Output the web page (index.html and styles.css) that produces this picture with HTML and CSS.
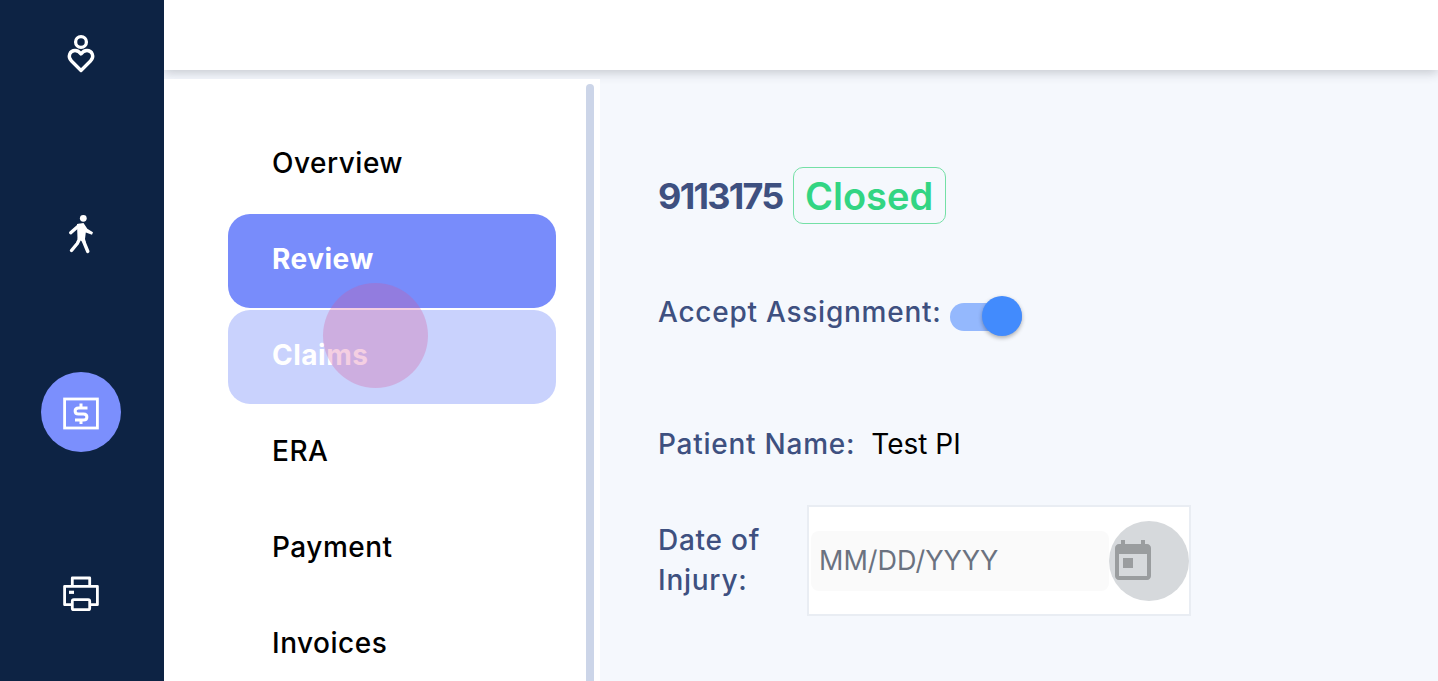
FILE: index.html
```html
<!DOCTYPE html>
<html lang="en">
<head>
<meta charset="utf-8">
<title>Claim 9113175</title>
<link rel="stylesheet" href="styles.css">
</head>
<body>
<div class="app">
  <aside class="rail">
    <div class="rail-item">
      <svg class="rail-icon" viewBox="0 0 40 48" width="40" height="48"><circle cx="20" cy="14" r="5.4" class="ln"/><path class="ln" d="M20 42.5 L10.5 33 C6 28.5 9 22.5 14 22.5 C16.5 22.5 18.5 23.8 20 26 C21.5 23.8 23.5 22.5 26 22.5 C31 22.5 34 28.5 29.5 33 Z"/></svg>
    </div>
    <div class="rail-item">
      <svg class="rail-icon" viewBox="0 0 40 48" width="40" height="48"><circle cx="22.3" cy="10.3" r="3.4" class="fill"/><path class="fill" d="M16 16 L22.5 15 L26.3 20.8 L32 24.3 L31 26.8 L24.8 24.5 L24 31 L25 35 L16.5 31 Z"/><path class="ln-w" d="M18 17.5 L9.7 24.7"/><path class="ln-w" d="M21 30 L23.5 35.5 L26.8 43.5"/><path class="ln-w" d="M18.5 31 L16.3 35.5 L10.5 42.5"/></svg>
    </div>
    <div class="rail-item active">
      <svg class="rail-icon" viewBox="0 0 40 48" width="40" height="48"><rect x="3.6" y="11" width="32.8" height="29" class="ln-sq"/><path class="ln-d" d="M26.5 20 H17.5 C13 20 13 26 17.5 26 H22.5 C27 26 27 32 22.5 32 H14"/><path class="ln-d" d="M20 15.5 V20 M20 32 V36"/></svg>
    </div>
    <div class="rail-item">
      <svg class="rail-icon" viewBox="0 0 40 48" width="40" height="48"><path class="ln-sq rnd" d="M11.3 18.3 V10 H28.7 V18.3"/><path class="ln-sq rnd" d="M11.3 36.7 H3.6 V18.3 H36.4 V36.7 H28.7"/><rect x="11.3" y="31.6" width="17.4" height="10.1" rx="1.5" class="ln-sq"/><rect x="8" y="22.7" width="5" height="3.2" class="fill"/></svg>
    </div>
  </aside>
  <div class="page">
    <header class="topbar"></header>
    <div class="body">
      <nav class="menu">
        <a class="menu-item">Overview</a>
        <a class="menu-item current">Review</a>
        <a class="menu-item hover">Claims</a>
        <a class="menu-item">ERA</a>
        <a class="menu-item">Payment</a>
        <a class="menu-item">Invoices</a>
        <span class="ripple"></span>
        <span class="scroll-thumb"></span>
      </nav>
      <main class="detail">
        <div class="title-row">
          <h1 class="claim-id">9113175</h1>
          <span class="status">Closed</span>
        </div>
        <div class="toggle-row">
          <span class="label">Accept Assignment:</span>
          <span class="switch"><span class="switch-thumb"></span></span>
        </div>
        <div class="patient-row">
          <span class="label">Patient Name:</span>
          <span class="value">Test PI</span>
        </div>
        <div class="date-row">
          <div class="label date-label">Date of<br>Injury:</div>
          <div class="date-box">
            <div class="date-input">MM/DD/YYYY</div>
            <div class="date-btn">
              <svg viewBox="0 0 24 24" width="48" height="48"><path d="M19 3h-1V1h-2v2H8V1H6v2H5c-1.11 0-1.99.9-1.99 2L3 19c0 1.1.89 2 2 2h14c1.1 0 2-.9 2-2V5c0-1.1-.9-2-2-2zm0 16H5V8h14v11zM7 10h5v5H7z"/></svg>
            </div>
          </div>
        </div>
      </main>
    </div>
  </div>
</div>
</body>
</html>
```
FILE: styles.css
```css
* { box-sizing: border-box; }
html, body { margin: 0; height: 100%; overflow: hidden; }
body { font-family: "Inter", "Liberation Sans", sans-serif; background: #f5f8fd; }
.app { display: flex; height: 681px; }

.rail { width: 164px; flex: none; background: #0d2344; padding: 12px 2px 0 0; display: flex; flex-direction: column; align-items: center; gap: 100px; z-index: 3; }
.rail-item { width: 80px; height: 80px; flex: none; border-radius: 50%; display: flex; align-items: center; justify-content: center; }
.rail-item.active { background: #7b8ffd; }
.rail-icon { display: block; }
.ln { fill: none; stroke: #fff; stroke-width: 3.3; stroke-linejoin: round; }
.ln-w { fill: none; stroke: #fff; stroke-width: 3.4; stroke-linejoin: round; stroke-linecap: round; }
.ln-sq { fill: none; stroke: #fff; stroke-width: 2.8; }
.ln-sq.rnd { stroke-linejoin: round; }
.ln-d { fill: none; stroke: #fff; stroke-width: 3; }
.fill { fill: #fff; }

.page { flex: 1; display: flex; flex-direction: column; min-width: 0; }
.topbar { height: 70px; flex: none; background: #fff; box-shadow: 0 3px 10px rgba(50, 55, 65, .24); position: relative; z-index: 1; }
.body { flex: 1; display: flex; min-height: 0; }

.menu { width: 436px; flex: none; margin-top: 9px; background: #fff; padding: 39px 44px 0 64px; display: flex; flex-direction: column; gap: 2px; position: relative; z-index: 2; overflow: hidden; }
.menu-item { height: 94px; flex: none; border-radius: 22px; padding: 0 0 4px 44px; display: flex; align-items: center; font-size: 28px; font-weight: 500; color: #000; letter-spacing: .5px; }
.menu-item.current { background: #788cfb; color: #fff; font-weight: 700; }
.menu-item.hover { background: #c9d2fd; color: #fff; font-weight: 700; }
.ripple { position: absolute; left: 159px; top: 204px; width: 105px; height: 105px; border-radius: 50%; background: rgba(215, 82, 150, .28); }
.scroll-thumb { position: absolute; left: 422px; top: 5px; bottom: -10px; width: 8px; border-radius: 4px; background: #ccd5e8; }

.detail { flex: 1; padding: 97px 0 0 58px; min-width: 0; color: #3e5080; }
.title-row { display: flex; align-items: center; gap: 10px; }
.claim-id { margin: 0; font-size: 36px; font-weight: 700; letter-spacing: -1.75px; color: #3e5080; }
.status { height: 57px; width: 153px; display: flex; align-items: center; justify-content: center; border: 1px solid #74e0a6; border-radius: 10px; font-size: 38px; font-weight: 600; color: #32d583; }
.label { font-size: 28px; font-weight: 500; letter-spacing: .75px; color: #3e5080; }
.toggle-row { display: flex; align-items: center; gap: 8px; margin-top: 73px; height: 40px; }
.toggle-row .label { position: relative; top: -5px; }
.switch { width: 72px; height: 28px; border-radius: 14px; background: #94b8fd; position: relative; flex: none; }
.switch-thumb { position: absolute; right: 0; top: -7px; width: 40px; height: 40px; border-radius: 50%; background: #428bfd; box-shadow: 0 2px 4px rgba(0, 0, 0, .3); }
.patient-row { display: flex; align-items: center; gap: 16px; margin-top: 87px; height: 40px; }
.value { font-size: 28px; color: #000; }
.date-row { display: flex; margin-top: 41px; }
.date-label { width: 149px; flex: none; padding-top: 15px; line-height: 40px; }
.date-box { width: 384px; height: 111px; background: #fff; border: 2px solid #e9edf3; display: flex; align-items: center; padding-left: 2px; }
.date-input { width: 298px; height: 60px; border-radius: 8px; background: #fafafa; padding-left: 8px; display: flex; align-items: center; font-size: 27px; color: #6b7280; flex: none; }
.date-btn { width: 80px; height: 80px; border-radius: 50%; background: #d6d9dc; display: flex; align-items: center; flex: none; }
.date-btn svg { fill: #9a9d9f; display: block; position: relative; top: 1px; }
```
